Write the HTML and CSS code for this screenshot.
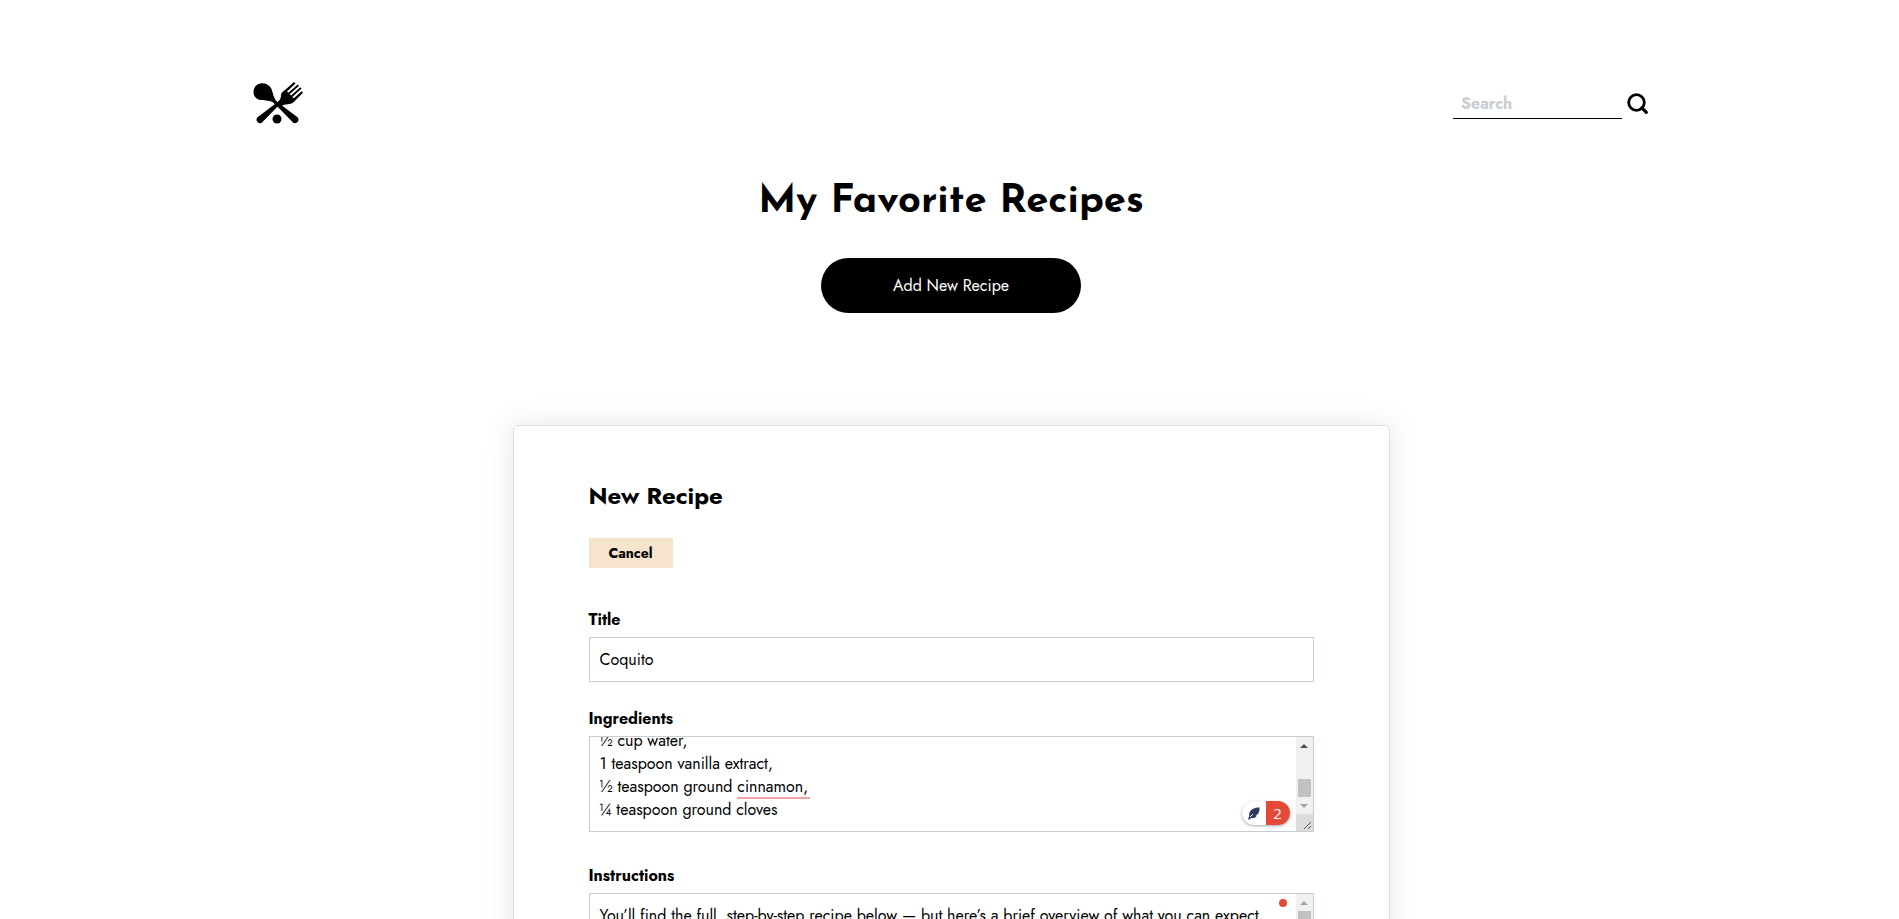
FILE: index.html
```html
<!DOCTYPE html>
<html lang="en">
<head>
<meta charset="utf-8">
<title>My Favorite Recipes</title>
<link rel="stylesheet" href="styles.css">
</head>
<body>
<header class="topbar">
  <a class="logo" href="#" aria-label="Home">
    <svg width="50" height="42" viewBox="0 0 50 42" aria-hidden="true">
      <path d="M1 7C3 0 14-1 18 6c2 4 2 9 6 14l-2 2c-4-4-8-3-12-4C3 19-1 13 1 7Z"/>
      <path d="M23 19 43.500 34.500a3.500 3.500 0 1 1-4.500 5L21 21Z"/>
      <path d="M26 19 5.500 34.500a3.500 3.500 0 1 0 4.500 5L28 21Z"/>
      <path d="M23 21c4-2 5-5 5-8 0-2 2-4 4-5L41 0l1.500 1.500-8.500 8 1.300 1.300 9.400-8.300 1.300 1.300-9.300 8.400 1.300 1.300 9.300-8.200 1.300 1.300-9.200 8.300 1.300 1.300 8-7 1.300 1.500-9 9c-4 4-9 1-13 5Z"/>
      <circle cx="24" cy="37" r="4.500"/>
    </svg>
  </a>
  <form class="search" role="search">
    <input class="search-input" type="text" placeholder="Search" aria-label="Search">
    <button class="search-button" type="button" aria-label="Search">
      <svg width="22" height="22" viewBox="0 0 22 22" fill="none" stroke="#000" stroke-width="2.800" aria-hidden="true">
        <circle cx="9.500" cy="9.500" r="7.800"/>
        <path d="m14.800 14.800 4.500 4.500" stroke-linecap="round" stroke-width="3.200"/>
      </svg>
    </button>
  </form>
</header>
<main>
  <section class="hero">
    <h1 class="hero-title">My Favorite Recipes</h1>
    <button class="add-button" type="button">Add New Recipe</button>
  </section>
  <section class="card">
    <h2 class="card-title">New Recipe</h2>
    <button class="cancel-button" type="button">Cancel</button>
    <form class="recipe-form">
      <div class="field">
        <label for="title">Title</label>
        <input class="control" id="title" type="text" value="Coquito">
      </div>
      <div class="field">
        <label for="ingredients">Ingredients</label>
        <div class="area">
          <textarea class="control" id="ingredients" spellcheck="false">½ cup water,
1 teaspoon vanilla extract,
½ teaspoon ground cinnamon,
¼ teaspoon ground cloves</textarea>
          <span class="spelling-mark"></span>
          <div class="scrollbar" aria-hidden="true">
            <span class="arrow arrow-up"></span>
            <span class="thumb thumb-low"></span>
            <span class="arrow arrow-down faded"></span>
            <svg class="grip" width="17" height="17" viewBox="0 0 17 17" stroke="#555"><path d="m8 15 7-7M12 15l3-3"/></svg>
          </div>
          <div class="checker">
            <span class="checker-icon">
              <svg width="12" height="13" viewBox="0 0 12 13" aria-hidden="true"><path fill="#2b3c5c" d="M11.500.5C8 0 3.500 2 2 4.500c-1 1.700-.5 3.500-1 5L0 12.500h1.500L3 11c2.500.5 5-.5 6-2.500H7.500L10 7c.8-1.200 2-4 1.500-6.500Z"/><path d="m2 10 3-3" stroke="#fff"/></svg>
            </span>
            <span class="checker-count">2</span>
          </div>
        </div>
      </div>
      <div class="field">
        <label for="instructions">Instructions</label>
        <div class="area">
          <textarea class="control" id="instructions" spellcheck="false">You’ll find the full, step-by-step recipe below — but here’s a brief overview of what you can expect</textarea>
          <div class="scrollbar" aria-hidden="true">
            <span class="arrow arrow-up faded"></span>
            <span class="thumb"></span>
          </div>
          <span class="status-dot"></span>
        </div>
      </div>
    </form>
  </section>
</main>
<script src="script.js"></script>
</body>
</html>
```
FILE: styles.css
```css
* { box-sizing: border-box; }
html { scrollbar-width: none; }
body {
  margin: 0;
  padding-left: 3px;
  background: #fff;
  color: #000;
  font: 16px/23px Jost, Lato, sans-serif;
}
button, input, textarea { font: inherit; color: inherit; }
button { border: 0; cursor: pointer; }

.topbar {
  display: flex;
  justify-content: space-between;
  align-items: center;
  width: 74%;
  max-width: 1396px;
  margin: 0 auto;
  padding-top: 82px;
}
.logo, .logo svg { display: block; }
.search { display: flex; align-items: center; gap: 5px; }
.search-input {
  width: 169px;
  height: 31px;
  padding: 2px 8px 0;
  border: 0;
  border-bottom: 1px solid #000;
  outline: 0;
  font-weight: 700;
}
.search-input::placeholder { color: #c7cdd1; opacity: 1; }
.search-button { display: flex; padding: 2px 0 0; background: none; }

.hero {
  display: flex;
  flex-direction: column;
  align-items: center;
  gap: 28px;
  padding-top: 50px;
}
.hero-title { margin: 0; font: 700 40px/56px "Josefin Sans", Lato, sans-serif; }
.add-button {
  width: 260px;
  height: 55px;
  border-radius: 28px;
  background: #000;
  color: #fff;
}

.card {
  width: 877px;
  max-width: 100%;
  margin: 112px auto 60px;
  padding: 52px 75px 75px;
  border: 1px solid #ddd;
  border-radius: 5px;
  box-shadow: 0 0 30px rgba(0, 0, 0, 0.1);
}
.card-title { margin: 0 0 24px; font-size: 24px; line-height: 36px; font-weight: 700; }
.cancel-button {
  display: block;
  width: 84px;
  height: 30px;
  padding: 0;
  background: #f6e4cd;
  font-size: 14px;
  font-weight: 700;
}
.recipe-form { padding-top: 40px; }
.field { display: flex; flex-direction: column; gap: 6px; margin-bottom: 25px; }
.field + .field + .field { margin-top: 32px; }
.field label { font-weight: 700; }
.control {
  display: block;
  width: 100%;
  height: 45px;
  padding: 10px;
  border: 1px solid #c7cdd1;
  border-radius: 0;
  background: #fff;
  outline: 0;
}
.area { position: relative; }
textarea.control {
  height: 96px;
  padding-right: 28px;
  resize: none;
  scrollbar-width: none;
}

.scrollbar {
  position: absolute;
  top: 1px;
  right: 1px;
  bottom: 1px;
  display: flex;
  flex-direction: column;
  align-items: center;
  width: 17px;
  background: #f1f1f1;
}
.arrow { flex: none; margin: 7px 0 6px; border: 4px solid transparent; }
.arrow-up { border-top: 0; border-bottom-color: #505050; }
.arrow-down { border-bottom: 0; border-top-color: #505050; }
.arrow-up.faded { border-bottom-color: #a3a3a3; }
.arrow-down.faded { border-top-color: #a3a3a3; }
.thumb { width: 13px; height: 18px; background: #c1c1c1; }
.thumb-low { margin-top: 25px; }
.grip { position: absolute; bottom: 0; background: #dcdcdc; }

.spelling-mark {
  position: absolute;
  left: 148px;
  top: 61px;
  width: 73px;
  height: 2px;
  background: #f2a1a6;
}
.checker {
  position: absolute;
  right: 24px;
  bottom: 7px;
  display: flex;
  width: 48px;
  height: 24px;
  border-radius: 12px;
  overflow: hidden;
  background: #fff;
  box-shadow: 0 1px 3px rgba(0, 0, 0, 0.35);
}
.checker-icon, .checker-count { display: flex; flex: 1; align-items: center; justify-content: center; }
.checker-count { background: #e54937; color: #fff; font-family: "Open Sans", sans-serif; font-size: 15px; }
.status-dot {
  position: absolute;
  top: 6px;
  right: 27px;
  width: 8px;
  height: 8px;
  border-radius: 50%;
  background: #e54937;
}
```
FILE: script.js
```js
const ingredients = document.getElementById("ingredients");
ingredients.scrollTop = ingredients.scrollHeight;
```
